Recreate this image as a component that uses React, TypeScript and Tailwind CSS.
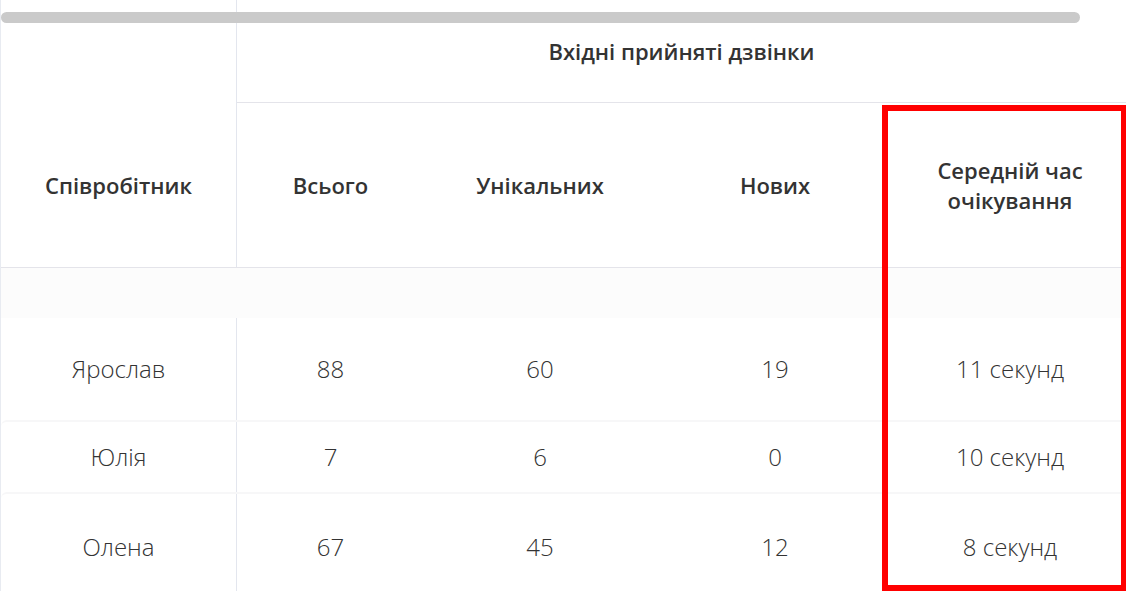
const cols = [
  { label: 'Всього', w: 'w-[187px]' },
  { label: 'Унікальних', w: 'w-[232px]' },
  { label: 'Нових', w: 'w-[238px]' },
  { label: 'Середній час очікування', w: 'w-[232px]' },
]

const rows = [
  { name: 'Ярослав', h: 'h-[102px]', values: ['88', '60', '19', '11 секунд'] },
  { name: 'Юлія', h: 'h-[72px]', values: ['7', '6', '0', '10 секунд'] },
  { name: 'Олена', h: 'h-[108px]', values: ['67', '45', '12', '8 секунд'] },
]

const widths = ['w-[187px]', 'w-[232px]', 'w-[238px]', 'w-[232px]']

export default function App() {
  return (
    <div
      className="relative w-[1126px] h-[591px] overflow-hidden bg-white border-l border-[#e8ebf1] text-[#333333]"
      style={{ fontFamily: '"Open Sans", "Noto Sans", sans-serif' }}
    >
      {/* header */}
      <div className="flex border-b border-[#e4e4ea]">
        <div className="w-[236px] h-[267px] shrink-0 border-r border-[#e3e6ee] pt-[103px] flex">
          <div className="flex-1 flex items-center justify-center text-[22px] font-semibold">
            Співробітник
          </div>
        </div>
        <div className="flex-1 flex flex-col">
          <div className="h-[103px] border-b border-[#e4e4ea] flex items-center justify-center text-[22px] font-semibold">
            Вхідні прийняті дзвінки
          </div>
          <div className="flex flex-1">
            {cols.map((c) => (
              <div
                key={c.label}
                className={`${c.w} shrink-0 flex items-center justify-center text-center text-[22px] font-semibold leading-[30px] px-8`}
              >
                {c.label}
              </div>
            ))}
          </div>
        </div>
      </div>

      {/* empty band */}
      <div className="h-[50px] bg-[#fcfcfc]" />

      {/* rows */}
      {rows.map((r, i) => (
        <div
          key={r.name}
          className={`flex ${r.h} ${i > 0 ? 'border-t-2 border-[#f7f7f8] rounded-tl-md' : ''} text-[24px] font-light`}
        >
          <div className="w-[236px] shrink-0 border-r border-[#e3e6ee] flex items-center justify-center">
            {r.name}
          </div>
          {r.values.map((v, j) => (
            <div key={j} className={`${widths[j]} shrink-0 flex items-center justify-center`}>
              {v}
            </div>
          ))}
        </div>
      ))}

      {/* scrollbar */}
      <div className="absolute left-0 top-[12px] w-[1079px] h-[11px] rounded-full bg-[#cacaca]" />

      {/* highlight */}
      <div className="absolute left-[881px] top-[105px] w-[245px] h-[486px] border-[6px] border-[#ff0000]" />
    </div>
  )
}
